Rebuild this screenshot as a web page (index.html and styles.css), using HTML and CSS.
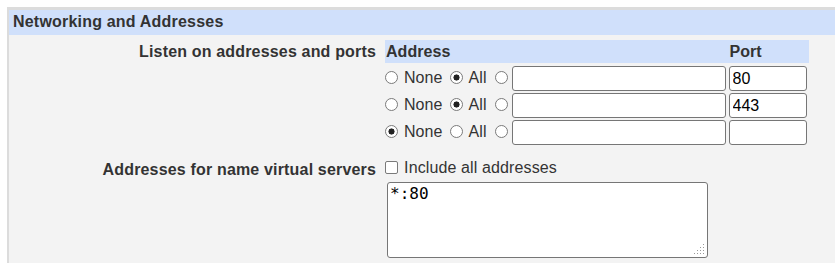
FILE: index.html
```html
<!DOCTYPE html>
<html lang="en">

<head>
    <meta charset="UTF-8">
    <title>Networking and Addresses</title>
    <link rel="stylesheet" href="styles.css">
</head>

<body>
    <div class="panel">
        <div class="panel-head">Networking and Addresses</div>
        <table class="opts">
            <tr>
                <td class="lbl">Listen on addresses and ports</td>
                <td>
                    <table class="addr">
                        <tr class="addr-head">
                            <td>Address</td>
                            <td>Port</td>
                        </tr>
                        <tr>
                            <td>
                                <label><input type="radio" name="a0"> None</label>
                                <label><input type="radio" name="a0" checked> All</label>
                                <input type="radio" name="a0">
                                <input type="text" class="host">
                            </td>
                            <td><input type="text" class="port" value="80"></td>
                        </tr>
                        <tr>
                            <td>
                                <label><input type="radio" name="a1"> None</label>
                                <label><input type="radio" name="a1" checked> All</label>
                                <input type="radio" name="a1">
                                <input type="text" class="host">
                            </td>
                            <td><input type="text" class="port" value="443"></td>
                        </tr>
                        <tr>
                            <td>
                                <label><input type="radio" name="a2" checked> None</label>
                                <label><input type="radio" name="a2"> All</label>
                                <input type="radio" name="a2">
                                <input type="text" class="host">
                            </td>
                            <td><input type="text" class="port"></td>
                        </tr>
                    </table>
                </td>
            </tr>
            <tr class="second">
                <td class="lbl">Addresses for name virtual servers</td>
                <td>
                    <label class="check"><input type="checkbox"> Include all addresses</label>
                    <div class="names-wrap">
                        <textarea class="names">*:80</textarea>
                        <svg class="grip" width="11" height="11" viewBox="0 0 11 11">
                            <g fill="#9a9a9a">
                                <rect x="9" y="0" width="1" height="1"/>
                                <rect x="6" y="3" width="1" height="1"/>
                                <rect x="9" y="3" width="1" height="1"/>
                                <rect x="3" y="6" width="1" height="1"/>
                                <rect x="6" y="6" width="1" height="1"/>
                                <rect x="9" y="6" width="1" height="1"/>
                                <rect x="0" y="9" width="1" height="1"/>
                                <rect x="3" y="9" width="1" height="1"/>
                                <rect x="6" y="9" width="1" height="1"/>
                                <rect x="9" y="9" width="1" height="1"/>
                            </g>
                        </svg>
                    </div>
                </td>
            </tr>
        </table>
    </div>
</body>

</html>
```

FILE: styles.css
```css
* {
    box-sizing: border-box;
}

body {
    margin: 0;
    padding: 7px 0 0 7px;
    background-color: #fff;
    font-family: "Liberation Sans", Arial, sans-serif;
    font-size: 16px;
    color: #333;
    overflow: hidden;
}

.panel {
    width: 828px;
    background-color: #f3f3f3;
    border-top: 3px solid #dcdcdc;
    border-left: 2px solid #dcdcdc;
    padding-bottom: 10px;
}

.panel-head {
    background-color: #d0e0fb;
    font-weight: bold;
    letter-spacing: 0.2px;
    padding: 3px 4px;
    height: 25px;
}

.opts {
    border-collapse: collapse;
    margin-top: 5px;
}

.opts td {
    vertical-align: top;
    padding: 0;
}

.lbl {
    width: 376px;
    text-align: right;
    font-weight: bold;
    letter-spacing: 0.17px;
    padding: 3px 9px 0 0 !important;
    white-space: nowrap;
}

.second td {
    padding-top: 12px;
}

.second .lbl {
    padding-top: 14px !important;
}

.addr {
    border-collapse: collapse;
}

.addr td {
    padding: 0 0 2px 0;
    white-space: nowrap;
    letter-spacing: 0.05px;
}

.addr tr:nth-child(2) td {
    padding-top: 3px;
}

.addr-head td {
    background-color: #d0e0fb;
    font-weight: bold;
    height: 23px;
    padding: 3px 0 0 1px;
    vertical-align: top;
}

input[type=radio], input[type=checkbox] {
    appearance: none;
    width: 13px;
    height: 13px;
    margin: 0 1.5px 0 3.5px;
    border: 1px solid #7a7a7a;
    background: #fff;
    vertical-align: -1px;
}

input[type=radio] {
    border-radius: 50%;
}

input[type=radio]:checked {
    background: radial-gradient(circle, #222 0, #222 2.8px, #fff 3.3px);
}

input[type=checkbox] {
    border-radius: 2px;
}

label:first-child input {
    margin-left: 0;
}

input[type=text] {
    font-family: "Liberation Sans", Arial, sans-serif;
    font-size: 16px;
    height: 25px;
    border: 1px solid #767676;
    border-radius: 3px;
    padding: 1px 3px;
    background: #fff;
    color: #000;
    vertical-align: middle;
}

.host {
    width: 214px;
    margin-left: -2px;
    margin-right: 3px;
}

.port {
    width: 78px;
    margin-right: 2px;
}

.check {
    display: block;
    margin: 0 0 5px 0;
    letter-spacing: 0.12px;
}

.check input {
    margin-left: 1px;
}

.names-wrap {
    position: relative;
    width: 323px;
}

.names {
    display: block;
    width: 321px;
    height: 76px;
    margin-left: 2px;
    font-family: "DejaVu Sans Mono", monospace;
    font-size: 16px;
    border: 1px solid #767676;
    border-radius: 3px;
    padding: 1px 2px;
    color: #000;
    resize: none;
}

.grip {
    position: absolute;
    right: 3px;
    bottom: 3px;
}
```
